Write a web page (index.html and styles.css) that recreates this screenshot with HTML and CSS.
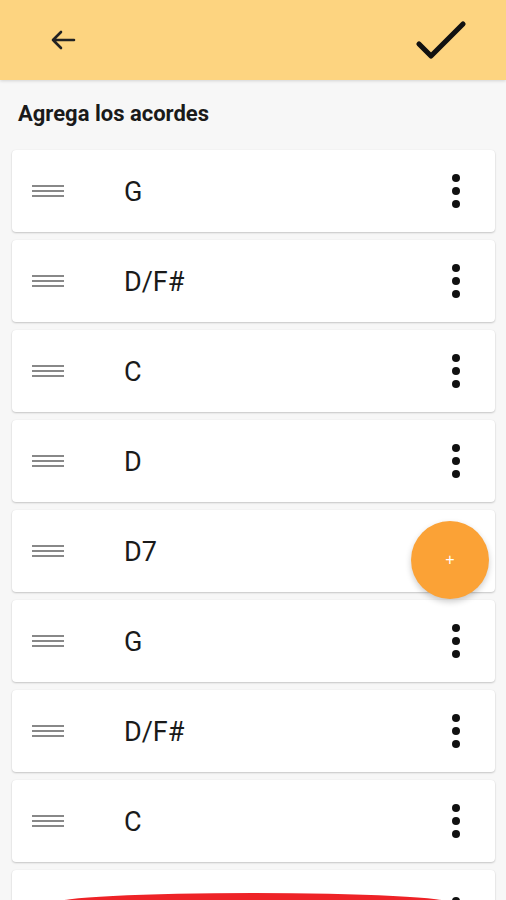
FILE: index.html
```html
<!DOCTYPE html>
<html lang="es">
<head>
  <meta charset="UTF-8" />
  <title>Agrega los acordes</title>
  <link rel="stylesheet" href="styles.css">
</head>
<body>
  <header class="topbar">
    <button class="icon-btn back" aria-label="Volver">
      <svg width="26" height="20" viewBox="0 0 26 20"><path d="M24 10H3M11 2L3 10l8 8" fill="none" stroke="#222" stroke-width="2.6" stroke-linecap="round" stroke-linejoin="round"/></svg>
    </button>
    <button class="icon-btn done" aria-label="Guardar">
      <svg width="54" height="42" viewBox="0 0 54 42"><path d="M5 25l12 12L49 5" fill="none" stroke="#111" stroke-width="5.2" stroke-linecap="round" stroke-linejoin="round"/></svg>
    </button>
  </header>

  <main class="content">
    <h2 class="title">Agrega los acordes</h2>

    <ul class="chords">
      <li class="chord"><span class="handle"></span><span class="name">G</span><span class="more"><i></i><i></i><i></i></span></li>
      <li class="chord"><span class="handle"></span><span class="name">D/F#</span><span class="more"><i></i><i></i><i></i></span></li>
      <li class="chord"><span class="handle"></span><span class="name">C</span><span class="more"><i></i><i></i><i></i></span></li>
      <li class="chord"><span class="handle"></span><span class="name">D</span><span class="more"><i></i><i></i><i></i></span></li>
      <li class="chord"><span class="handle"></span><span class="name">D7</span><span class="more"><i></i><i></i><i></i></span></li>
      <li class="chord"><span class="handle"></span><span class="name">G</span><span class="more"><i></i><i></i><i></i></span></li>
      <li class="chord"><span class="handle"></span><span class="name">D/F#</span><span class="more"><i></i><i></i><i></i></span></li>
      <li class="chord"><span class="handle"></span><span class="name">C</span><span class="more"><i></i><i></i><i></i></span></li>
      <li class="chord last"><span class="red-pill"></span><span class="more"><i></i><i></i><i></i></span></li>
    </ul>
  </main>

  <button class="fab" aria-label="Agregar">+</button>
</body>
</html>
```

FILE: styles.css
```css
body {
  margin: 0;
  font-family: Roboto, "Noto Sans", sans-serif;
  background: #f7f7f7;
  color: #222;
  overflow: hidden;
  height: 900px;
}
.topbar {
  height: 80px;
  background: #fdd480;
  display: flex;
  align-items: center;
  justify-content: space-between;
  padding: 0 38px 0 50px;
  box-shadow: 0 1px 3px rgba(0, 0, 0, 0.15);
}
.icon-btn {
  background: none;
  border: 0;
  padding: 0;
  display: flex;
}
.done {
  margin-top: -1px;
}
.content {
  padding: 0 11px 0 12px;
}
.title {
  margin: 0;
  padding: 22px 0 24px 6px;
  font-size: 22px;
  font-weight: 700;
  line-height: 24px;
  color: #1a1a1a;
}
.chords {
  list-style: none;
  margin: 0;
  padding: 0;
  display: flex;
  flex-direction: column;
  gap: 8px;
}
.chord {
  height: 82px;
  background: #fff;
  border-radius: 4px;
  box-shadow: 0 1px 2px rgba(0, 0, 0, 0.2), 0 0 1px rgba(0, 0, 0, 0.08);
  display: flex;
  align-items: center;
  padding: 0 35px 0 20px;
  box-sizing: border-box;
}
.handle {
  width: 32px;
  height: 2px;
  background: #888;
  box-shadow: 0 5px 0 #888, 0 -5px 0 #888;
  margin-right: 60px;
}
.name {
  flex: 1;
  font-size: 27px;
  color: #1a1a1a;
  margin-top: 2px;
}
.more {
  display: flex;
  flex-direction: column;
  gap: 5px;
}
.more i {
  width: 8px;
  height: 8px;
  border-radius: 50%;
  background: #111;
}
.last {
  align-items: flex-start;
  padding-top: 23px;
  overflow: hidden;
}
.last .red-pill {
  margin-left: 23px;
  width: 396px;
  height: 40px;
  border-radius: 50% / 10px;
  background: #ee2327;
  flex: none;
}
.last .more {
  margin-left: auto;
  margin-top: 4px;
}
.fab {
  position: absolute;
  left: 411px;
  top: 521px;
  width: 78px;
  height: 78px;
  border-radius: 50%;
  border: 0;
  background: #fba236;
  color: #fff;
  font-size: 16px;
  line-height: 1;
  box-shadow: 0 3px 6px rgba(0, 0, 0, 0.2);
}
```
